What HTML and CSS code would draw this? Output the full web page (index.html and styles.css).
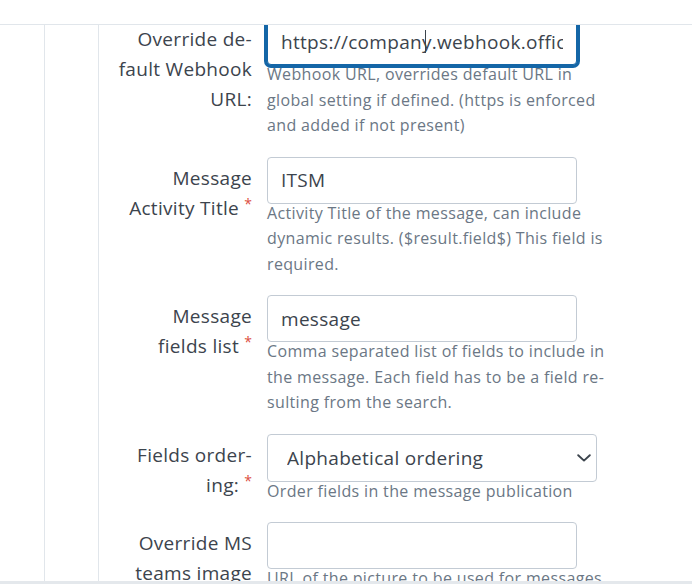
FILE: index.html
```html
<!DOCTYPE html>
<html lang="en">
<head>
<meta charset="utf-8">
<title>Alert action settings</title>
<link rel="stylesheet" href="styles.css">
</head>
<body>
<div class="page">
  <div class="topbar"></div>
  <div class="viewport">
    <div class="rail"></div>
    <div class="nav"></div>
    <div class="content">
      <div class="form">
        <div class="row">
          <label class="label">Override de-<br>fault Webhook<br>URL:</label>
          <div class="control">
            <div class="field is-focused">
              <input class="input" type="text" value="https://company.webhook.office.com/webhookb2/">
              <span class="caret"></span>
            </div>
            <div class="help">Webhook URL, overrides default URL in<br>global setting if defined. (https is enforced<br>and added if not present)</div>
          </div>
        </div>
        <div class="row">
          <label class="label">Message<br>Activity Title <span class="req">*</span></label>
          <div class="control">
            <div class="field"><input class="input" type="text" value="ITSM"></div>
            <div class="help">Activity Title of the message, can include<br>dynamic results. ($result.field$) This field is<br>required.</div>
          </div>
        </div>
        <div class="row">
          <label class="label">Message<br>fields list <span class="req">*</span></label>
          <div class="control">
            <div class="field"><input class="input" type="text" value="message"></div>
            <div class="help">Comma separated list of fields to include in<br>the message. Each field has to be a field re-<br>sulting from the search.</div>
          </div>
        </div>
        <div class="row">
          <label class="label">Fields order-<br>ing: <span class="req">*</span></label>
          <div class="control">
            <div class="field select-field">
              <select class="select">
                <option>Alphabetical ordering</option>
                <option>Custom ordering</option>
              </select>
              <svg class="chevron" width="14" height="8" viewBox="0 0 14 8" aria-hidden="true"><path d="M1.2 1.2 L7 6.6 L12.8 1.2" fill="none" stroke="#3c444d" stroke-width="1.9" stroke-linecap="round" stroke-linejoin="round"/></svg>
            </div>
            <div class="help">Order fields in the message publication</div>
          </div>
        </div>
        <div class="row">
          <label class="label">Override MS<br>teams image<br>URL:</label>
          <div class="control">
            <div class="field"><input class="input" type="text" value=""></div>
            <div class="help">URL of the picture to be used for messages<br>publication.</div>
          </div>
        </div>
      </div>
    </div>
  </div>
  <div class="footer"></div>
</div>
</body>
</html>
```

FILE: styles.css
```css
html, body {
  margin: 0;
  padding: 0;
  background: #ffffff;
}

body {
  font-family: "Open Sans", Lato, "Liberation Sans", sans-serif;
  color: #3c444d;
  width: 692px;
  height: 584px;
  overflow: hidden;
}

.page {
  height: 584px;
  display: flex;
  flex-direction: column;
}

.topbar {
  height: 24px;
  flex: none;
  border-bottom: 1px solid #e1e6eb;
  background: #ffffff;
}

.viewport {
  flex: 1;
  display: flex;
  overflow: hidden;
  min-height: 0;
}

.rail {
  width: 44px;
  flex: none;
}

.nav {
  width: 53px;
  flex: none;
  border-left: 1px solid #e1e6eb;
}

.content {
  flex: 1;
  border-left: 1px solid #e1e6eb;
  padding-left: 13px;
}

.form {
  margin-top: -7px;
}

.row {
  display: grid;
  grid-template-columns: 140px 345px;
  column-gap: 15px;
  margin-bottom: 18px;
}

.label {
  text-align: right;
  font-size: 19px;
  letter-spacing: 0.3px;
  line-height: 30px;
  color: #3c444d;
  padding-top: 6px;
  white-space: nowrap;
}

.req {
  color: #dc4e41;
  font-size: 14px;
  letter-spacing: 0;
  vertical-align: 6px;
  line-height: 0;
}

.field {
  position: relative;
  width: 310px;
}

.input {
  display: block;
  box-sizing: border-box;
  width: 310px;
  height: 47px;
  margin: 0;
  padding: 0 13px;
  border: 1px solid #c3cbd4;
  border-radius: 4px;
  background: #ffffff;
  font-family: inherit;
  font-size: 19px;
  letter-spacing: 0.3px;
  color: #3c444d;
  outline: none;
}

.is-focused .input {
  border-color: #1466a7;
  box-shadow: 0 0 0 3px #1466a7;
}

.caret {
  position: absolute;
  left: 158px;
  top: 12px;
  width: 1px;
  height: 23px;
  background: #3c444d;
}

.select-field {
  width: 330px;
}

.select {
  display: block;
  box-sizing: border-box;
  width: 330px;
  height: 48px;
  margin: 0;
  padding: 0 19px;
  border: 1px solid #c3cbd4;
  border-radius: 4px;
  background: #ffffff;
  font-family: inherit;
  font-size: 19px;
  letter-spacing: 0.3px;
  color: #3c444d;
  appearance: none;
  -webkit-appearance: none;
  outline: none;
}

.chevron {
  position: absolute;
  right: 6px;
  top: 20px;
  pointer-events: none;
}

.help {
  font-size: 16px;
  letter-spacing: 0.35px;
  line-height: 25.5px;
  color: #6b7785;
  margin-top: -3px;
  white-space: nowrap;
}

.footer {
  height: 3px;
  flex: none;
  background: #e4e8ec;
}
```
